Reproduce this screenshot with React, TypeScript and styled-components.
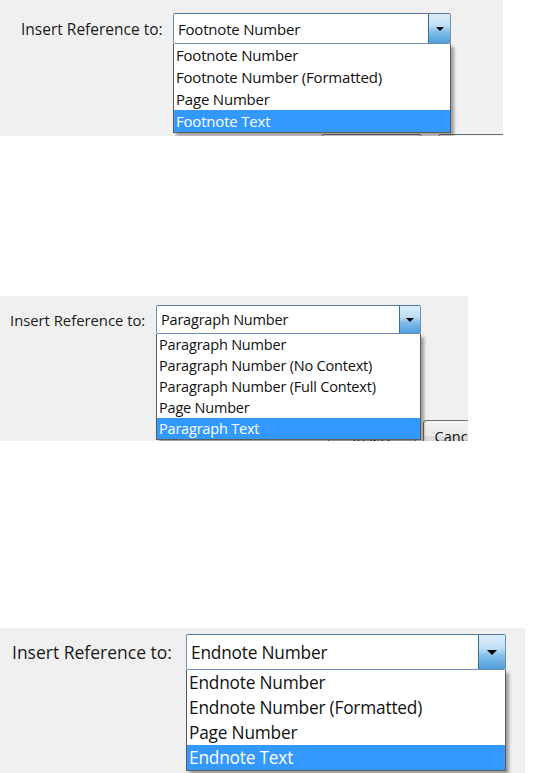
import React from "react";
import styled, { createGlobalStyle } from "styled-components";

const Global = createGlobalStyle`
  html, body { margin: 0; padding: 0; background: #ffffff; }
  body { font-family: "Open Sans", "Noto Sans", sans-serif; color: #111; }
`;

type Btn = { label: string; width: number; gap: number };
type Cfg = {
  top: number;
  width: number;
  height: number;
  font: number;
  labelFont: number;
  labelLeft: number;
  boxLeft: number;
  boxTop: number;
  boxWidth: number;
  boxHeight: number;
  arrowWidth: number;
  rowH: number;
  value: string;
  items: string[];
  active: number;
  footerH: number;
  footerLeft: number;
  btnH: number;
  buttons: Btn[];
};

const panels: Cfg[] = [
  {
    top: 0, width: 503, height: 136, font: 15, labelFont: 15.5, labelLeft: 21, boxLeft: 173, boxTop: 13,
    boxWidth: 278, boxHeight: 31, arrowWidth: 22, rowH: 22, value: "Footnote Number",
    items: ["Footnote Number", "Footnote Number (Formatted)", "Page Number", "Footnote Text"],
    active: 3, footerH: 2, footerLeft: 321, btnH: 30,
    buttons: [{ label: "", width: 101, gap: 0 }, { label: "", width: 100, gap: 16 }],
  },
  {
    top: 160, width: 468, height: 145, font: 14.5, labelFont: 14.8, labelLeft: 10, boxLeft: 156, boxTop: 9,
    boxWidth: 265, boxHeight: 29, arrowWidth: 21, rowH: 21, value: "Paragraph Number",
    items: ["Paragraph Number", "Paragraph Number (No Context)", "Paragraph Number (Full Context)", "Page Number", "Paragraph Text"],
    active: 4, footerH: 21, footerLeft: 328, btnH: 32,
    buttons: [{ label: "Insert", width: 88, gap: 0 }, { label: "Cancel", width: 68, gap: 7 }],
  },
  {
    top: 187, width: 525, height: 145, font: 17.3, labelFont: 17.5, labelLeft: 12, boxLeft: 186, boxTop: 6,
    boxWidth: 320, boxHeight: 36, arrowWidth: 27, rowH: 25, value: "Endnote Number",
    items: ["Endnote Number", "Endnote Number (Formatted)", "Page Number", "Endnote Text"],
    active: 3, footerH: 0, footerLeft: 0, btnH: 0, buttons: [],
  },
];

const Page = styled.div`
  display: flex;
  flex-direction: column;
  align-items: flex-start;
`;

const Panel = styled.section<{ $top: number; $w: number; $h: number; $font: number }>`
  margin-top: ${(p) => p.$top}px;
  width: ${(p) => p.$w}px;
  height: ${(p) => p.$h}px;
  background: #f0f0f0;
  display: flex;
  flex-direction: column;
  overflow: hidden;
  font-size: ${(p) => p.$font}px;
  box-sizing: border-box;
`;

const Row = styled.div<{ $pt: number; $pl: number }>`
  display: flex;
  align-items: center;
  padding-top: ${(p) => p.$pt}px;
  padding-left: ${(p) => p.$pl}px;
`;

const Label = styled.span<{ $w: number; $font: number }>`
  width: ${(p) => p.$w}px;
  flex: none;
  white-space: nowrap;
  color: #1a1a1a;
  font-size: ${(p) => p.$font}px;
`;

const Combo = styled.div<{ $w: number; $h: number }>`
  position: relative;
  width: ${(p) => p.$w}px;
  height: ${(p) => p.$h}px;
  flex: none;
  z-index: 2;
`;

const Field = styled.div`
  display: flex;
  height: 100%;
  box-sizing: border-box;
  border: 1px solid #6f8fae;
  border-top-color: #55779a;
  border-radius: 2px;
  background: #ffffff;
  overflow: hidden;
`;

const Value = styled.span`
  flex: 1;
  display: flex;
  align-items: center;
  padding-left: 4px;
  white-space: nowrap;
  color: #111;
  letter-spacing: -0.2px;
`;

const Arrow = styled.span<{ $w: number }>`
  width: ${(p) => p.$w}px;
  flex: none;
  display: flex;
  align-items: center;
  justify-content: center;
  box-sizing: border-box;
  border-left: 1px solid #3a6f9c;
  background: linear-gradient(#dcedf9 0%, #bfdff5 40%, #84c0ec 60%, #4f9fd8 100%);
`;

const List = styled.ul`
  position: absolute;
  top: 100%;
  left: 0;
  right: 0;
  margin: 0;
  padding: 0;
  list-style: none;
  background: #ffffff;
  border: 1px solid #5c5c5c;
  border-top: none;
  box-shadow: 3px 3px 3px rgba(0, 0, 0, 0.35);
`;

const Item = styled.li<{ $h: number; $active: boolean }>`
  height: ${(p) => p.$h}px;
  line-height: ${(p) => p.$h}px;
  padding-left: 2px;
  white-space: nowrap;
  letter-spacing: -0.2px;
  background: ${(p) => (p.$active ? "#3399ff" : "transparent")};
  color: ${(p) => (p.$active ? "#ffffff" : "#111111")};
`;

const Footer = styled.div<{ $h: number; $pl: number }>`
  margin-top: auto;
  height: ${(p) => p.$h}px;
  padding-left: ${(p) => p.$pl}px;
  display: flex;
  align-items: flex-start;
  overflow: hidden;
  flex: none;
`;

const Button = styled.div<{ $w: number; $h: number; $gap: number }>`
  width: ${(p) => p.$w}px;
  height: ${(p) => p.$h}px;
  margin-left: ${(p) => p.$gap}px;
  flex: none;
  box-sizing: border-box;
  border: 1px solid #707070;
  border-radius: 3px;
  background: linear-gradient(#f2f2f2 0%, #ebebeb 50%, #dddddd 51%, #cfcfcf 100%);
  display: flex;
  align-items: center;
  justify-content: center;
  color: #111;
`;

function Triangle({ size }: { size: number }) {
  return (
    <svg width={size} height={size / 2} viewBox="0 0 8 4">
      <path d="M0 0 H8 L4 4 Z" fill="#000" />
    </svg>
  );
}

export default function App() {
  return (
    <>
      <Global />
      <Page>
        {panels.map((c, i) => (
          <Panel key={i} $top={c.top} $w={c.width} $h={c.height} $font={c.font}>
            <Row $pt={c.boxTop} $pl={c.labelLeft}>
              <Label $w={c.boxLeft - c.labelLeft} $font={c.labelFont}>
                Insert Reference to:
              </Label>
              <Combo $w={c.boxWidth} $h={c.boxHeight}>
                <Field>
                  <Value>{c.value}</Value>
                  <Arrow $w={c.arrowWidth}>
                    <Triangle size={Math.round(c.arrowWidth * 0.36)} />
                  </Arrow>
                </Field>
                <List>
                  {c.items.map((t, j) => (
                    <Item key={j} $h={c.rowH} $active={j === c.active}>
                      {t}
                    </Item>
                  ))}
                </List>
              </Combo>
            </Row>
            {c.buttons.length > 0 && (
              <Footer $h={c.footerH} $pl={c.footerLeft}>
                {c.buttons.map((b, k) => (
                  <Button key={k} $w={b.width} $h={c.btnH} $gap={b.gap}>
                    {b.label}
                  </Button>
                ))}
              </Footer>
            )}
          </Panel>
        ))}
      </Page>
    </>
  );
}
